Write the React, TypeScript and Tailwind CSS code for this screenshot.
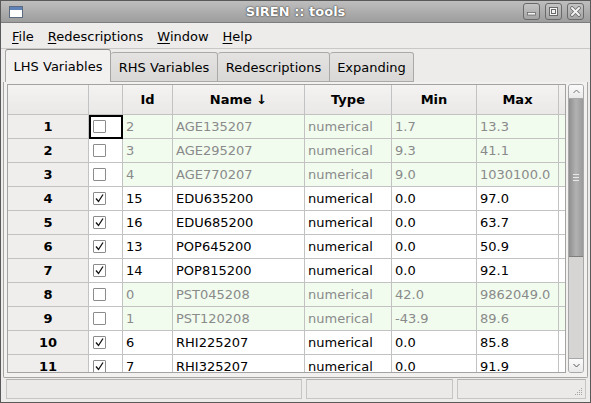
import React from 'react';

const rows = [
  { n: 1, checked: false, id: '2', name: 'AGE135207', min: '1.7', max: '13.3', off: true },
  { n: 2, checked: false, id: '3', name: 'AGE295207', min: '9.3', max: '41.1', off: true },
  { n: 3, checked: false, id: '4', name: 'AGE770207', min: '9.0', max: '1030100.0', off: true },
  { n: 4, checked: true, id: '15', name: 'EDU635200', min: '0.0', max: '97.0', off: false },
  { n: 5, checked: true, id: '16', name: 'EDU685200', min: '0.0', max: '63.7', off: false },
  { n: 6, checked: true, id: '13', name: 'POP645200', min: '0.0', max: '50.9', off: false },
  { n: 7, checked: true, id: '14', name: 'POP815200', min: '0.0', max: '92.1', off: false },
  { n: 8, checked: false, id: '0', name: 'PST045208', min: '42.0', max: '9862049.0', off: true },
  { n: 9, checked: false, id: '1', name: 'PST120208', min: '-43.9', max: '89.6', off: true },
  { n: 10, checked: true, id: '6', name: 'RHI225207', min: '0.0', max: '85.8', off: false },
  { n: 11, checked: true, id: '7', name: 'RHI325207', min: '0.0', max: '91.9', off: false },
];

const menus = ['File', 'Redescriptions', 'Window', 'Help'];
const tabs = ['RHS Variables', 'Redescriptions', 'Expanding'];
const headers = ['Id', 'Name ↓', 'Type', 'Min', 'Max'];

const TitleButton = ({ kind }: { kind: 'min' | 'max' | 'close' }) => (
  <div className="w-[17px] h-[17px] rounded-[3px] border border-[#6a6a6a] bg-gradient-to-b from-[#c4c4c4] to-[#a4a4a4] flex items-center justify-center">
    <svg width="11" height="11" viewBox="0 0 11 11">
      {kind === 'min' && <rect x="1.5" y="6.5" width="8" height="2.5" fill="#f4f4f4" stroke="#6a6a6a" strokeWidth="0.8" />}
      {kind === 'max' && (
        <g fill="none" stroke="#6a6a6a">
          <rect x="1.5" y="1.5" width="8" height="8" fill="#f4f4f4" />
          <rect x="3.5" y="3.5" width="4" height="4" />
        </g>
      )}
      {kind === 'close' && (
        <g>
          <path d="M2 2 L9 9 M9 2 L2 9" stroke="#6a6a6a" strokeWidth="3.6" strokeLinecap="round" />
          <path d="M2 2 L9 9 M9 2 L2 9" stroke="#f4f4f4" strokeWidth="2" strokeLinecap="round" />
        </g>
      )}
    </svg>
  </div>
);

const Checkbox = ({ checked }: { checked: boolean }) => (
  <div className="w-[13px] h-[13px] border border-[#8c8c8c] bg-white rounded-[1px] flex items-center justify-center">
    {checked && (
      <svg width="11" height="11" viewBox="0 0 11 11">
        <path d="M2 5.5 L4.5 8.5 L9 1.5" fill="none" stroke="#111" strokeWidth="1.3" />
      </svg>
    )}
  </div>
);

const cols = 'grid grid-cols-[81px_34px_50px_132px_87px_85px_82px_1fr]';

export default function App() {
  return (
    <div className="w-[591px] h-[403px] bg-[#edeceb] border border-[#595959] flex flex-col overflow-hidden text-[13px] text-black font-['DejaVu_Sans',sans-serif]">
      {/* Title bar */}
      <div className="h-[22px] shrink-0 bg-gradient-to-b from-[#bebebe] to-[#9d9d9d] border-b border-[#7d7d7d] grid grid-cols-[1fr_auto_1fr] items-center">
        <div className="pl-[8px] flex items-center">
          <div className="w-[14px] h-[12px] border border-[#5c6a80] bg-white flex flex-col">
            <div className="h-[3px] bg-[#5f83b8]" />
          </div>
        </div>
        <div className="font-bold text-white text-[13px] [text-shadow:0_0_2px_#3a3a3a,0_0_1px_#3a3a3a]">SIREN :: tools</div>
        <div className="flex justify-end gap-[5px] pr-[6px]">
          <TitleButton kind="min" />
          <TitleButton kind="max" />
          <TitleButton kind="close" />
        </div>
      </div>

      {/* Menu bar */}
      <div className="h-[26px] shrink-0 flex items-center border-b border-[#c9c8c6] pl-[11px] gap-[14px] pt-[2px]">
        {menus.map((m) => (
          <span key={m}>
            <span className="underline underline-offset-2">{m[0]}</span>
            {m.slice(1)}
          </span>
        ))}
      </div>

      {/* Tabs */}
      <div className="h-[33px] shrink-0 flex items-end pl-[4px] pt-[1px]">
        <div className="h-[33px] w-[106px] rounded-t-[3px] border border-b-0 border-[#a6a5a3] border-t-[#8b8a88] bg-[#f2f1f0] flex items-center justify-center pt-[2px]">
          LHS Variables
        </div>
        {tabs.map((t, i) => (
          <div
            key={t}
            className={`h-[30px] rounded-t-[3px] border border-[#aaa9a7] border-l-0 bg-gradient-to-b from-[#e4e3e1] to-[#d9d8d6] flex items-center justify-center pt-[1px] ${
              i === 0 ? 'w-[107px]' : i === 1 ? 'w-[112px]' : 'w-[84px]'
            }`}
          >
            {t}
          </div>
        ))}
      </div>

      {/* Tab panel */}
      <div className="h-[296px] shrink-0 mx-[2px] border border-[#a6a5a3] border-t-0 rounded-b-[2px] bg-[#f2f1f0] flex pl-[3px] pt-[2px] pr-[3px] gap-[2px]">
        <div className="w-[560px] h-[289px] border border-[#a3a3a3] bg-white overflow-hidden">
          <div className={`${cols} h-[30px] bg-gradient-to-b from-[#f4f3f2] to-[#e9e8e6] font-bold`}>
            <div className="border-r border-b border-[#c2c2c2]" />
            <div className="border-r border-b border-[#c2c2c2]" />
            {headers.map((h) => (
              <div key={h} className="border-r border-b border-[#c2c2c2] flex items-center justify-center">
                {h}
              </div>
            ))}
            <div className="border-b border-[#c2c2c2]" />
          </div>
          {rows.map((r) => {
            const cell = `border-r border-b border-[#c2c2c2] flex items-center pl-[3px] ${
              r.off ? 'bg-[#f1fcef] text-[#8a8a8a]' : 'bg-white text-black'
            }`;
            return (
              <div key={r.n} className={`${cols} h-[24px]`}>
                <div className="border-r border-b border-[#c2c2c2] bg-[#efeeed] font-bold flex items-center justify-center">
                  {r.n}
                </div>
                <div
                  className={`border-r border-b border-[#c2c2c2] bg-white flex items-center pl-[4px] ${
                    r.n === 1 ? 'outline-2 outline-black -outline-offset-2' : ''
                  }`}
                >
                  <Checkbox checked={r.checked} />
                </div>
                <div className={cell}>{r.id}</div>
                <div className={cell}>{r.name}</div>
                <div className={cell}>numerical</div>
                <div className={cell}>{r.min}</div>
                <div className={cell}>{r.max}</div>
                <div className={`border-b border-[#c2c2c2] ${r.off ? 'bg-[#f1fcef]' : 'bg-white'}`} />
              </div>
            );
          })}
        </div>

        {/* Scrollbar */}
        <div className="w-[16px] h-[289px] rounded-[3px] border border-[#a8a8a8] bg-[#e2e1df] flex flex-col overflow-hidden">
          <div className="h-[14px] shrink-0 bg-gradient-to-b from-[#fbfbfb] to-[#e9e9e9] border-b border-[#a8a8a8] flex items-center justify-center">
            <svg width="7" height="5" viewBox="0 0 7 5"><path d="M0.5 4 L3.5 1 L6.5 4" fill="none" stroke="#777" /></svg>
          </div>
          <div className="h-[158px] shrink-0 bg-gradient-to-r from-[#8f8f8f] via-[#b2b2b2] to-[#9a9a9a] border-b border-[#7e7e7e] flex items-center justify-center">
            <div className="flex flex-col gap-[2px]">
              <div className="w-[6px] h-px bg-[#e8e8e8]" />
              <div className="w-[6px] h-px bg-[#e8e8e8]" />
              <div className="w-[6px] h-px bg-[#e8e8e8]" />
            </div>
          </div>
          <div className="flex-1 bg-[#d6d5d3]" />
          <div className="h-[14px] shrink-0 bg-gradient-to-b from-[#fbfbfb] to-[#e9e9e9] border-t border-[#a8a8a8] flex items-center justify-center">
            <svg width="7" height="5" viewBox="0 0 7 5"><path d="M0.5 1 L3.5 4 L6.5 1" fill="none" stroke="#555" /></svg>
          </div>
        </div>
      </div>

      {/* Status bar */}
      <div className="h-[20px] shrink-0 mt-[1px] flex gap-[4px] pl-[5px] pr-[4px]">
        <div className="w-[296px] border border-[#c6c5c3] border-t-[#b3b2b0] bg-[#ebeae9]" />
        <div className="w-[147px] border border-[#c6c5c3] border-t-[#b3b2b0] bg-[#ebeae9]" />
        <div className="flex-1 border border-[#c6c5c3] border-t-[#b3b2b0] bg-[#ebeae9] flex items-end justify-end p-[2px]">
          <svg width="10" height="10" viewBox="0 0 10 10" fill="#a5a5a5">
            <rect x="8" y="2" width="1" height="1" />
            <rect x="6" y="4" width="1" height="1" />
            <rect x="8" y="4" width="1" height="1" />
            <rect x="4" y="6" width="1" height="1" />
            <rect x="6" y="6" width="1" height="1" />
            <rect x="8" y="6" width="1" height="1" />
            <rect x="2" y="8" width="1" height="1" />
            <rect x="4" y="8" width="1" height="1" />
            <rect x="6" y="8" width="1" height="1" />
            <rect x="8" y="8" width="1" height="1" />
          </svg>
        </div>
      </div>
    </div>
  );
}
